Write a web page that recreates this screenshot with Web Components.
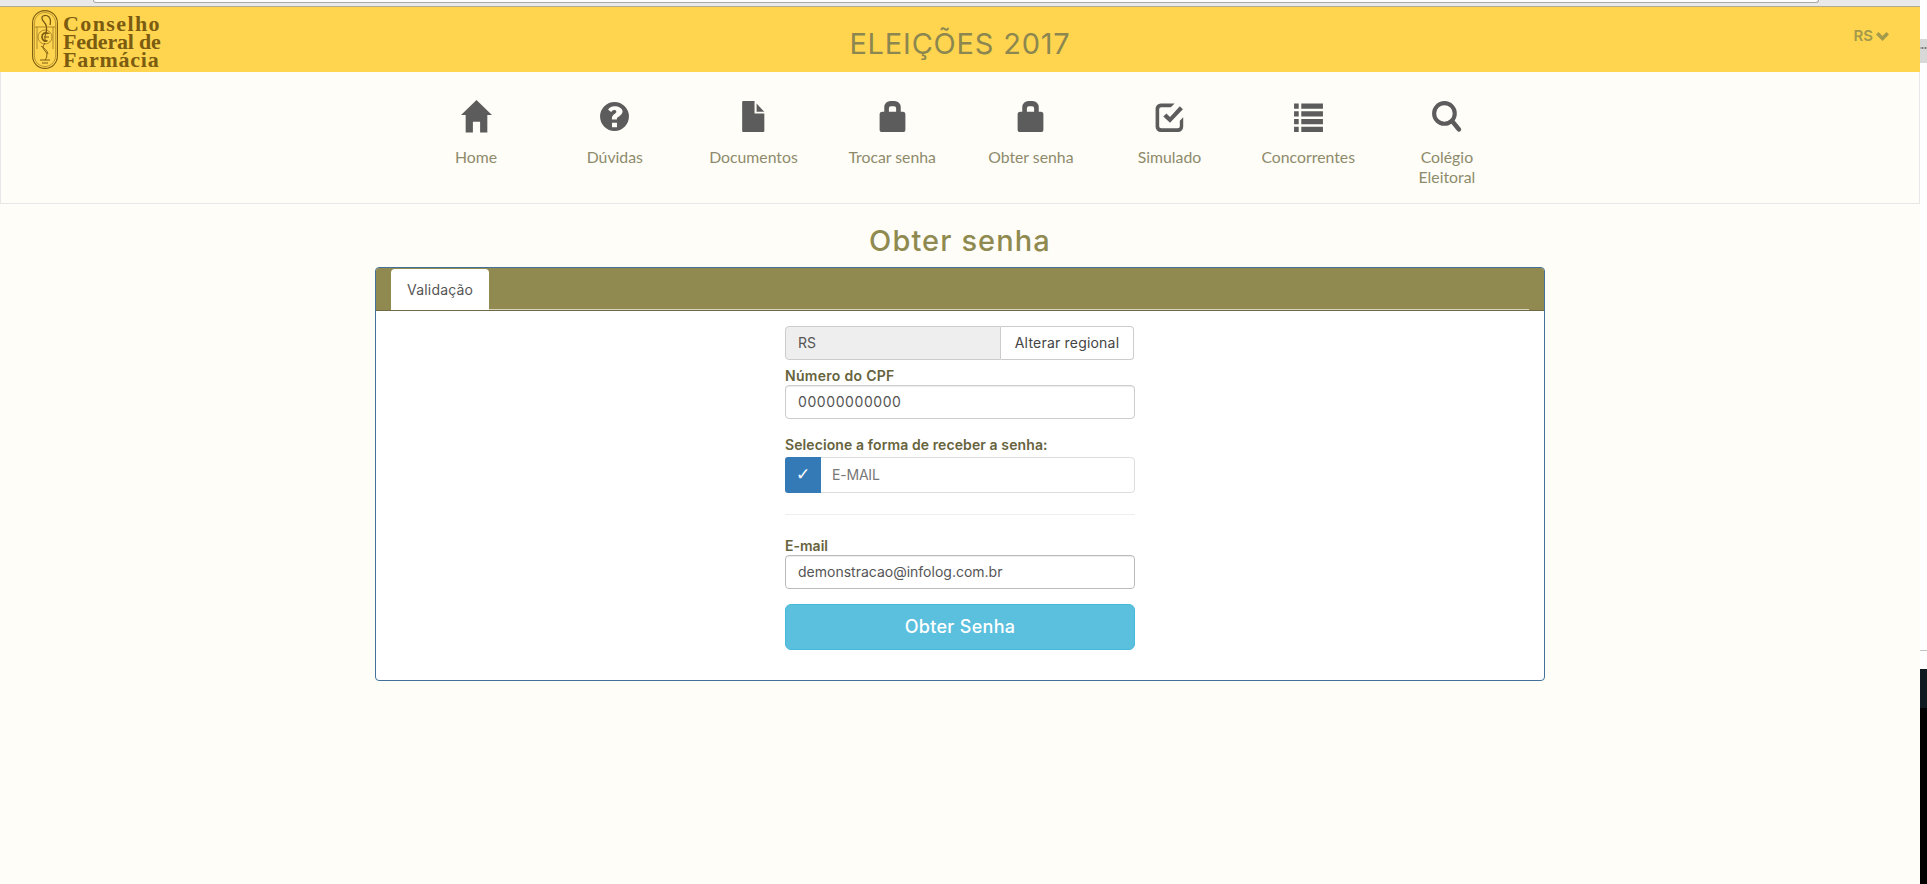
<!DOCTYPE html>
<html lang="pt-BR">
<head>
<meta charset="utf-8">
<title>Obter senha</title>
<style>
  html, body { margin: 0; height: 100%; background: #fff; }
  body { overflow: hidden; font-family: Inter, "Liberation Sans", sans-serif; }
</style>
</head>
<body>
<election-page>
  <election-header title-text="ELEIÇÕES 2017" regional="RS"></election-header>
  <main-nav></main-nav>
  <h-title>Obter senha</h-title>
  <tab-panel tab="Validação">
    <password-form></password-form>
  </tab-panel>
</election-page>

<script>
const FONT = 'Inter, "Liberation Sans", sans-serif';

class ElectionPage extends HTMLElement {
    constructor() {
        super();
        this.attachShadow({ mode: 'open' });
    }

    connectedCallback() {
        this.shadowRoot.innerHTML = `
            <style>
                :host { display: flex; width: 1927px; height: 884px; background: #fff; }
                .page { width: 1920px; flex: none; background: #fffdf7; display: flex; flex-direction: column; }
                .chrome { height: 7px; flex: none; background: #e9e9e9; border-bottom: 1px solid #b5ab90; box-sizing: border-box; }
                .chrome div { margin-left: 93px; width: 1726px; height: 3px; box-sizing: border-box; background: #fff; border: 1px solid #a9a9a9; border-top: 0; border-radius: 0 0 3px 3px; }
                .side { flex: 1; display: flex; flex-direction: column; }
                .side .a { height: 39px; background: #fff; }
                .side .scroll { height: 24px; background: #d8d8d8 radial-gradient(circle, #777 1px, transparent 1.200px) 1px 2px / 3px 5px repeat-x; background-size: 3px 14px; }
                .side .e { height: 587px; background: #fff; }
                .side .b { height: 1px; background: #c4c4c4; }
                .side .c { height: 18px; background: #fff; }
                .side .dark { height: 39px; background: #0f1a20; }
                .side .d { flex: 1; background: #000; }
            </style>
            <div class="page">
                <div class="chrome"><div></div></div>
                <slot></slot>
            </div>
            <div class="side">
                <div class="a"></div><div class="scroll"></div><div class="e"></div>
                <div class="b"></div><div class="c"></div><div class="dark"></div><div class="d"></div>
            </div>
        `;
    }
}

class ElectionHeader extends HTMLElement {
    constructor() {
        super();
        this.attachShadow({ mode: 'open' });
    }

    connectedCallback() {
        const title = this.getAttribute('title-text');
        const regional = this.getAttribute('regional');
        this.shadowRoot.innerHTML = `
            <style>
                :host { display: grid; grid-template-columns: 1fr auto 1fr; align-items: start; height: 65px; background: #ffd54f; font-family: ${FONT}; }
                .logo { display: flex; gap: 5px; padding: 3px 0 0 32px; color: #7b5b10; }
                .logo svg { width: 26px; height: 59px; flex: none; }
                .logo div { font: bold 22px/18px "Liberation Serif", serif; white-space: nowrap; padding-top: 5px; }
                .logo span { display: block; }
                h1 { margin: 0; padding-top: 19px; font-size: 29px; line-height: 36px; font-weight: 400; color: #8c8750; letter-spacing: .8px; }
                .regional { justify-self: end; display: flex; align-items: center; gap: 3px; padding: 20px 31px 0 0; font-size: 15px; line-height: 17px; font-weight: 600; color: #a39a4c; }
                .regional svg { width: 13px; height: 10px; }
            </style>
            <div class="logo">
                <svg viewBox="0 0 26 59" fill="none" stroke="currentColor">
                    <rect x=".6" y=".6" width="24.800" height="57.800" rx="12.400" stroke-width="1.100"/>
                    <rect x="2.400" y="2.400" width="21.200" height="54.200" rx="10.600" stroke-width=".5"/>
                    <path d="M2.800 17h20.400M5 17v22M21 17v22" stroke-width=".6"/>
                    <path d="M18 15C20 7 15 4 11 6c-2 1-1 4 1 6 3 3 3 7 2 11" stroke-width="1.300"/>
                    <circle cx="13" cy="27" r="7" stroke-width=".6"/>
                    <path d="M15.500 23.500c-3-1.500-5.500 .5-5.500 3.500s2.500 5 5.500 3.500" stroke-width="1.700"/>
                    <path d="M17.500 23.500c-3-1.200-4.500 .5-4.500 3.500v5M12 27h5" stroke-width="1.100"/>
                    <path d="M13 33c-3 4-2 6 0 8s3 5 0 9M9 36c3 2 6 4 7 8M8 50h10M10 53h6" stroke-width="1"/>
                </svg>
                <div>
                    <span style="letter-spacing:1.400px">Conselho</span>
                    <span style="letter-spacing:-.2px">Federal de</span>
                    <span style="letter-spacing:.75px">Farmácia</span>
                </div>
            </div>
            <h1>${title}</h1>
            <div class="regional">${regional}
                <svg viewBox="0 0 13 10" fill="currentColor"><path d="M0 3.500 2.500 1l4 4 4-4L13 3.500 6.500 10z"/></svg>
            </div>
        `;
    }
}

const NAV_ICONS = {
    home: '<path d="M16 0 31 14.500H26.500V31.500H19.500V21H12.500V31.500H5.500V14.500H1z"/>',
    help: '<path fill-rule="evenodd" d="M16 2a14 14 0 1 0 0 28 14 14 0 0 0 0-28zM13.600 22h4.800v4.500h-4.800zM16 6c-3.200 0-5 1.300-6.200 3.500l3 2.200c.8-1.200 1.600-1.900 3-1.900 1.200 0 2 .6 2 1.500 0 2-4.300 2.400-4.300 6.500v1.200h4.800v-.8c0-1.800 5.500-3 5.500-7.200C23.800 8 20 6 16 6z"/>',
    file: '<path d="M6 1H17V13H26.500V30a1 1 0 0 1-1 1H6a1 1 0 0 1-1-1V2a1 1 0 0 1 1-1zM19 3.500 26.500 11.500H19z"/>',
    lock: '<path fill-rule="evenodd" d="M8 11.500V7a6 6 0 0 1 6-6h4a6 6 0 0 1 6 6v4.500h2a2.500 2.500 0 0 1 2.500 2.500v14.500A2.500 2.500 0 0 1 26 31H6a2.500 2.500 0 0 1-2.500-2.500V14A2.500 2.500 0 0 1 6 11.500zM12.500 11.500h7V8a2 2 0 0 0-2-2h-3a2 2 0 0 0-2 2z"/>',
    check: '<path d="M7.500 3.300H21l-3.700 3.700H8a2 2 0 0 0-2 2V25.500a2 2 0 0 0 2 2h16a2 2 0 0 0 2-2v-5.500l3.300-3.300V26a5 5 0 0 1-5 5H7.500a5 5 0 0 1-5-5V8.300a5 5 0 0 1 5-5z"/><path d="M10 16 13 13 16.500 16.500 26 6l3 3-12.500 13z"/>',
    list: '<path d="M2 3.500h4.500v5H2zM9 3.500h21v5H9zM2 11h4.500v5H2zM9 11h21v5H9zM2 18.500h4.500v5H2zM9 18.500h21v5H9zM2 26h4.500v5H2zM9 26h21v5H9z"/>',
    search: '<circle cx="14" cy="13" r="10" fill="none" stroke="currentColor" stroke-width="4"/><path d="M21.500 20.500 28 28.500" fill="none" stroke="currentColor" stroke-width="4.500" stroke-linecap="round"/>'
};

class NavItem extends HTMLElement {
    constructor() {
        super();
        this.attachShadow({ mode: 'open' });
    }

    connectedCallback() {
        const icon = NAV_ICONS[this.getAttribute('icon')];
        this.shadowRoot.innerHTML = `
            <style>
                :host { display: flex; flex-direction: column; align-items: center; width: 138.700px; color: #5c5c5c; }
                svg { width: 33px; height: 33px; margin-bottom: 14px; flex: none; }
                span { font: 400 15.800px/20px Lato, sans-serif; color: #8d8b6c; text-align: center; max-width: 100px; }
                :host([nowide]) span { max-width: none; white-space: nowrap; }
            </style>
            <svg viewBox="0 0 32 32" fill="currentColor">${icon}</svg>
            <span><slot></slot></span>
        `;
    }
}

class MainNav extends HTMLElement {
    constructor() {
        super();
        this.attachShadow({ mode: 'open' });
    }

    connectedCallback() {
        this.shadowRoot.innerHTML = `
            <style>
                :host { display: flex; justify-content: center; height: 132px; box-sizing: border-box; padding: 28px 0 0 3px; background: #fffdf7; border: 1px solid #e7e7e7; border-top: 0; }
            </style>
            <nav-item icon="home" nowide>Home</nav-item>
            <nav-item icon="help" nowide>Dúvidas</nav-item>
            <nav-item icon="file" nowide>Documentos</nav-item>
            <nav-item icon="lock" nowide>Trocar senha</nav-item>
            <nav-item icon="lock" nowide>Obter senha</nav-item>
            <nav-item icon="check" nowide>Simulado</nav-item>
            <nav-item icon="list" nowide>Concorrentes</nav-item>
            <nav-item icon="search">Colégio Eleitoral</nav-item>
        `;
    }
}

class HTitle extends HTMLElement {
    constructor() {
        super();
        this.attachShadow({ mode: 'open' });
    }

    connectedCallback() {
        this.shadowRoot.innerHTML = `
            <style>
                :host { display: block; text-align: center; padding: 19px 0 8px; font: 500 29px/36px ${FONT}; color: #8f8a50; letter-spacing: 1.100px; }
            </style>
            <slot></slot>
        `;
    }
}

class TabPanel extends HTMLElement {
    constructor() {
        super();
        this.attachShadow({ mode: 'open' });
    }

    connectedCallback() {
        this.shadowRoot.innerHTML = `
            <style>
                :host { display: block; width: 1170px; box-sizing: border-box; margin: 0 auto; background: #fff; border: 1px solid #44719a; border-radius: 4px; font-family: ${FONT}; }
                .bar { height: 43px; box-sizing: border-box; padding: 0 15px; background: #918a50; border-bottom: 1px solid #6d6a45; border-radius: 3px 3px 0 0; display: flex; align-items: flex-end; }
                .tabs { flex: 1; height: 41px; box-sizing: border-box; border-bottom: 1px solid #d9d6bd; display: flex; }
                .tab { width: 98px; height: 41px; box-sizing: border-box; padding: 11px 0 0 16px; background: #fff; border-radius: 4px 4px 0 0; font-size: 14px; line-height: 20px; letter-spacing: .2px; color: #555; }
                .body { padding: 15px 0 30px; display: flex; justify-content: center; }
            </style>
            <div class="bar"><div class="tabs"><div class="tab">${this.getAttribute('tab')}</div></div></div>
            <div class="body"><slot></slot></div>
        `;
    }
}

class PasswordForm extends HTMLElement {
    constructor() {
        super();
        this.attachShadow({ mode: 'open' });
    }

    connectedCallback() {
        this.shadowRoot.innerHTML = `
            <style>
                :host { display: flex; flex-direction: column; width: 350px; font-family: ${FONT}; font-size: 14px; color: #555; }
                label { display: block; font-weight: 600; line-height: 17px; color: #66633d; font-size: 14px; }
                .group { display: flex; height: 34px; width: 349px; box-sizing: border-box; margin-bottom: 7px; }
                .addon { flex: 1; background: #eee; border: 1px solid #ccc; border-radius: 4px 0 0 4px; padding-left: 12px; line-height: 32px; }
                .btn { width: 133px; box-sizing: border-box; background: #fff; border: 1px solid #ccc; border-left: 0; border-radius: 0 4px 4px 0; text-align: center; line-height: 32px; color: #444; letter-spacing: .2px; }
                .input { height: 34px; box-sizing: border-box; border: 1px solid #ccc; border-radius: 4px; background: #fff; padding-left: 12px; line-height: 32px; box-shadow: inset 0 1px 1px rgba(0,0,0,.075); }
                .cpf { margin: 1px 0 17px; letter-spacing: .58px; }
                .mail { margin: 1px 0 15px; border-color: #bbb; }
                .pick { display: flex; height: 36px; box-sizing: border-box; margin-top: 4px; border: 1px solid #ddd; border-radius: 4px; background: #fff; }
                .tick { width: 36px; background: #337ab7; border-radius: 3px 0 0 3px; color: #fff; text-align: center; font: bold 17px/34px "DejaVu Sans", sans-serif; margin: -1px 0 -1px -1px; }
                .pick span { padding-left: 11px; line-height: 33px; color: #777; letter-spacing: -.2px; }
                hr { border: 0; border-top: 1px solid #eee; margin: 21px 0 22px; width: 100%; }
                .cta { height: 46px; background: #5bc0de; border: 1px solid #46b8da; box-sizing: border-box; border-radius: 6px; color: #fff; text-align: center; font-size: 18px; font-weight: 500; line-height: 44px; letter-spacing: .3px; }
            </style>
            <div class="group"><div class="addon">RS</div><div class="btn">Alterar regional</div></div>
            <label style="letter-spacing:.3px">Número do CPF</label>
            <div class="input cpf">00000000000</div>
            <label style="letter-spacing:.1px">Selecione a forma de receber a senha:</label>
            <div class="pick"><div class="tick">✓</div><span>E-MAIL</span></div>
            <hr>
            <label>E-mail</label>
            <div class="input mail">demonstracao@infolog.com.br</div>
            <div class="cta">Obter Senha</div>
        `;
    }
}

customElements.define('election-page', ElectionPage);
customElements.define('election-header', ElectionHeader);
customElements.define('nav-item', NavItem);
customElements.define('main-nav', MainNav);
customElements.define('h-title', HTitle);
customElements.define('tab-panel', TabPanel);
customElements.define('password-form', PasswordForm);
</script>
</body>
</html>
